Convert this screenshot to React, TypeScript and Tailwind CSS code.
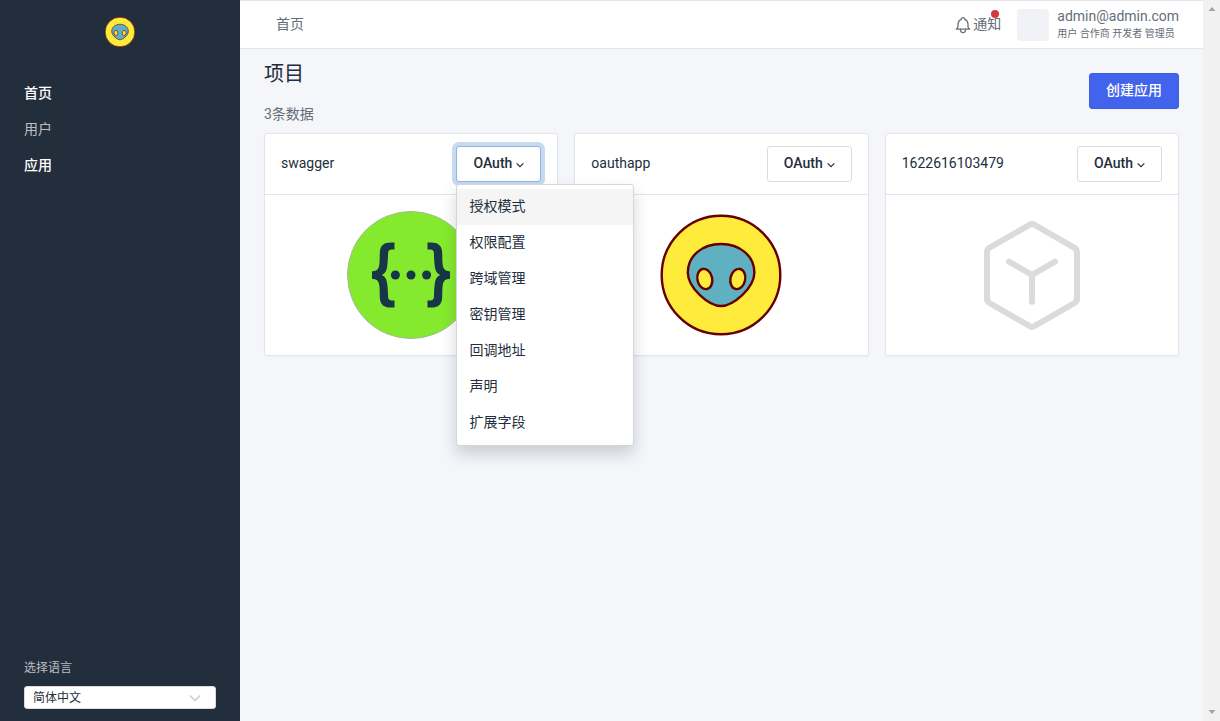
import { useId } from "react";

const navItems = [
  { label: "首页", strong: true },
  { label: "用户", strong: false },
  { label: "应用", strong: true },
];

const menuItems = ["授权模式", "权限配置", "跨域管理", "密钥管理", "回调地址", "声明", "扩展字段"];

function AlienLogo({ className }: { className: string }) {
  return (
    <svg viewBox="0 0 128 128" className={className} aria-hidden="true" stroke="#660000" strokeWidth="2.4">
      <circle cx="64" cy="64" r="59.3" fill="#ffeb3b" />
      <path
        d="M64 33C83 33 97.4 45 97.4 61.5C97.4 77 76 95 64 95C52 95 30.8 77 30.8 61.5C30.8 45 45 33 64 33Z"
        fill="#5fb0c0"
      />
      <ellipse cx="47.8" cy="68" rx="7.4" ry="10.2" transform="rotate(-12 47.8 68)" fill="#ffeb3b" />
      <ellipse cx="80.8" cy="68" rx="7.4" ry="10.2" transform="rotate(12 80.8 68)" fill="#ffeb3b" />
    </svg>
  );
}

const brace =
  "M47.5 31.6V38.6C42.5 38.2 41 39.2 41 43.5C41 47 40.8 50.5 40.3 54.5C39.8 59.5 38.5 62.2 34.8 64C38.5 65.8 39.8 68.5 40.3 73.5C40.8 77.5 41 81 41 84.5C41 88.8 42.5 89.8 47.5 89.4V96.4C38 97.5 33.2 94.5 32.8 86.5C32.6 82 32.9 79 32.3 74.5C31.7 69.5 29.5 67.9 25 67.7V60.3C29.5 60.1 31.7 58.5 32.3 53.5C32.9 49 32.6 46 32.8 41.5C33.2 33.5 38 30.5 47.5 31.6Z";

function SwaggerLogo({ className }: { className: string }) {
  return (
    <svg viewBox="0 0 128 128" className={className} aria-hidden="true">
      <circle cx="64" cy="64" r="63.5" fill="#85ea2d" stroke="#a3b996" strokeWidth="1" />
      <g fill="#173647">
        <path d={brace} />
        <path d={brace} transform="translate(128 0) scale(-1 1)" />
        <circle cx="48.4" cy="64" r="4.5" />
        <circle cx="64" cy="64" r="4.5" />
        <circle cx="79.6" cy="64" r="4.5" />
      </g>
    </svg>
  );
}

function BoxLogo({ className }: { className: string }) {
  return (
    <svg
      viewBox="0 0 128 128"
      className={className}
      aria-hidden="true"
      fill="none"
      stroke="#dbdbdb"
      strokeWidth="6"
      strokeLinecap="round"
      strokeLinejoin="round"
    >
      <path d="M61.5 13.8Q64 12.3 66.5 13.8L106.5 36.8Q109 38.3 109 41.3V87.5Q109 90.5 106.5 92L66.5 115Q64 116.5 61.5 115L21.5 92Q19 90.5 19 87.5V41.3Q19 38.3 21.5 36.8Z" />
      <path d="M41 50.7L64 64L87 50.7M64 64V90.7" />
    </svg>
  );
}

const apps = [
  { name: "swagger", Logo: SwaggerLogo, open: true },
  { name: "oauthapp", Logo: AlienLogo, open: false },
  { name: "1622616103479", Logo: BoxLogo, open: false },
];

function Chevron({ className, strokeWidth }: { className: string; strokeWidth: number }) {
  return (
    <svg
      viewBox="0 0 12 12"
      className={className}
      fill="none"
      stroke="currentColor"
      strokeWidth={strokeWidth}
      aria-hidden="true"
    >
      <path d="M1 3.5L6 8.5L11 3.5" />
    </svg>
  );
}

function Sidebar() {
  const id = useId();
  return (
    <aside className="flex w-60 shrink-0 flex-col bg-[#232e3c] text-white">
      <a href="#" aria-label="OAuthApp" className="flex h-16 items-center justify-center">
        <AlienLogo className="size-8" />
      </a>
      <nav className="mt-[11px] flex flex-col">
        {navItems.map((item) => (
          <a
            key={item.label}
            href="#"
            className={`flex h-9 items-center px-6 text-sm ${item.strong ? "font-medium text-white" : "text-white/70"}`}
          >
            {item.label}
          </a>
        ))}
      </nav>
      <div className="mt-auto px-6 pb-3">
        <label htmlFor={id} className="block text-xs leading-4 text-white/70">
          选择语言
        </label>
        <div className="relative mt-2.5">
          <select
            id={id}
            className="block h-[23px] w-full appearance-none rounded-[3px] border border-[#dadcde] bg-white px-2 text-xs text-[#232e3c]"
          >
            <option>简体中文</option>
          </select>
          <Chevron
            strokeWidth={1.4}
            className="pointer-events-none absolute top-1.5 right-[15px] size-3 text-[#c8cacc]"
          />
        </div>
      </div>
    </aside>
  );
}

function TopBar() {
  return (
    <header className="flex h-[49px] items-center border-y border-[#e3e5e8] bg-white pr-6 pl-9 text-sm text-[#656d77]">
      <a href="#" className="pb-0.5">
        首页
      </a>
      <button type="button" className="relative ml-auto flex items-center">
        <svg
          viewBox="0 0 24 24"
          className="size-5"
          fill="none"
          stroke="currentColor"
          strokeWidth="1.5"
          strokeLinecap="round"
          strokeLinejoin="round"
          aria-hidden="true"
        >
          <path d="M10 5a2 2 0 0 1 4 0a7 7 0 0 1 4 6v3a4 4 0 0 0 2 3h-16a4 4 0 0 0 2 -3v-3a7 7 0 0 1 4 -6" />
          <path d="M9 17v1a3 3 0 0 0 6 0v-1" />
        </svg>
        <span className="pb-0.5">通知</span>
        <span className="absolute -top-1 right-0.5 size-2 rounded-full bg-[#d63939]" />
      </button>
      <div className="ml-4 flex items-center gap-2">
        <span className="size-8 rounded bg-[#f0f2f6]" />
        <div>
          <div className="leading-[18px]">admin@admin.com</div>
          <div className="text-[10px] leading-[18px]">用户 合作商 开发者 管理员</div>
        </div>
      </div>
    </header>
  );
}

function AppCard({ name, Logo, open }: (typeof apps)[number]) {
  return (
    <article className="rounded-[3px] border border-[#e3e5e8] bg-white shadow-[0_1px_2px_rgba(35,46,60,0.04)]">
      <div className="flex items-center justify-between border-b border-[#e3e5e8] px-4 py-3">
        <h2 className="pb-0.5 text-sm">{name}</h2>
        <div className="relative">
          <button
            type="button"
            aria-haspopup="menu"
            aria-expanded={open}
            className={`flex h-9 items-center gap-1 rounded-[3px] border bg-white px-4 pb-0.5 text-sm font-medium ${
              open ? "border-[#90b5e2] shadow-[0_0_0_4px_#c8daf0]" : "border-[#dadcde]"
            }`}
          >
            OAuth
            <Chevron strokeWidth={1.8} className="mt-1 size-2" />
          </button>
          {open && (
            <div
              role="menu"
              className="absolute top-full left-0 z-10 mt-0.5 w-[178px] rounded-[3px] border border-[#d3d5d8] bg-white py-1 shadow-[0_8px_16px_rgba(35,46,60,0.2)]"
            >
              {menuItems.map((item, i) => (
                <a
                  key={item}
                  role="menuitem"
                  href="#"
                  className={`flex h-9 items-center px-3 pb-0.5 text-sm ${i === 0 ? "bg-[#f5f5f5]" : ""}`}
                >
                  {item}
                </a>
              ))}
            </div>
          )}
        </div>
      </div>
      <div className="flex justify-center p-4">
        <Logo className="size-32" />
      </div>
    </article>
  );
}

export default function App() {
  return (
    <div className="flex min-h-screen bg-[#f4f6fa] font-['Roboto','Noto_Sans_CJK_SC',sans-serif] text-[#232e3c]">
      <Sidebar />
      <div className="min-w-0 flex-1">
        <TopBar />
        <main className="px-6 pt-2.5 pb-6">
          <div className="flex items-start justify-between">
            <div>
              <h1 className="text-xl leading-[30px]">项目</h1>
              <p className="mt-3.5 text-sm leading-[22px] text-[#656d77]">3条数据</p>
            </div>
            <button
              type="button"
              className="mt-3.5 h-9 rounded-[3px] border border-[#3f5ee0] bg-[#4263eb] px-4 pb-0.5 text-sm font-medium text-white"
            >
              创建应用
            </button>
          </div>
          <div className="mt-2 grid grid-cols-3 gap-4">
            {apps.map((app) => (
              <AppCard key={app.name} {...app} />
            ))}
          </div>
        </main>
      </div>
      <div
        className="flex w-[17px] shrink-0 flex-col items-center justify-between bg-[#f1f1f1] py-1.5 text-[#a3a3a3]"
        aria-hidden="true"
      >
        <svg viewBox="0 0 8 6" className="h-1.5 w-2" fill="currentColor">
          <path d="M4 1L7.5 5H0.5Z" />
        </svg>
        <svg viewBox="0 0 8 6" className="h-1.5 w-2" fill="currentColor">
          <path d="M4 5L0.5 1H7.5Z" />
        </svg>
      </div>
    </div>
  );
}
